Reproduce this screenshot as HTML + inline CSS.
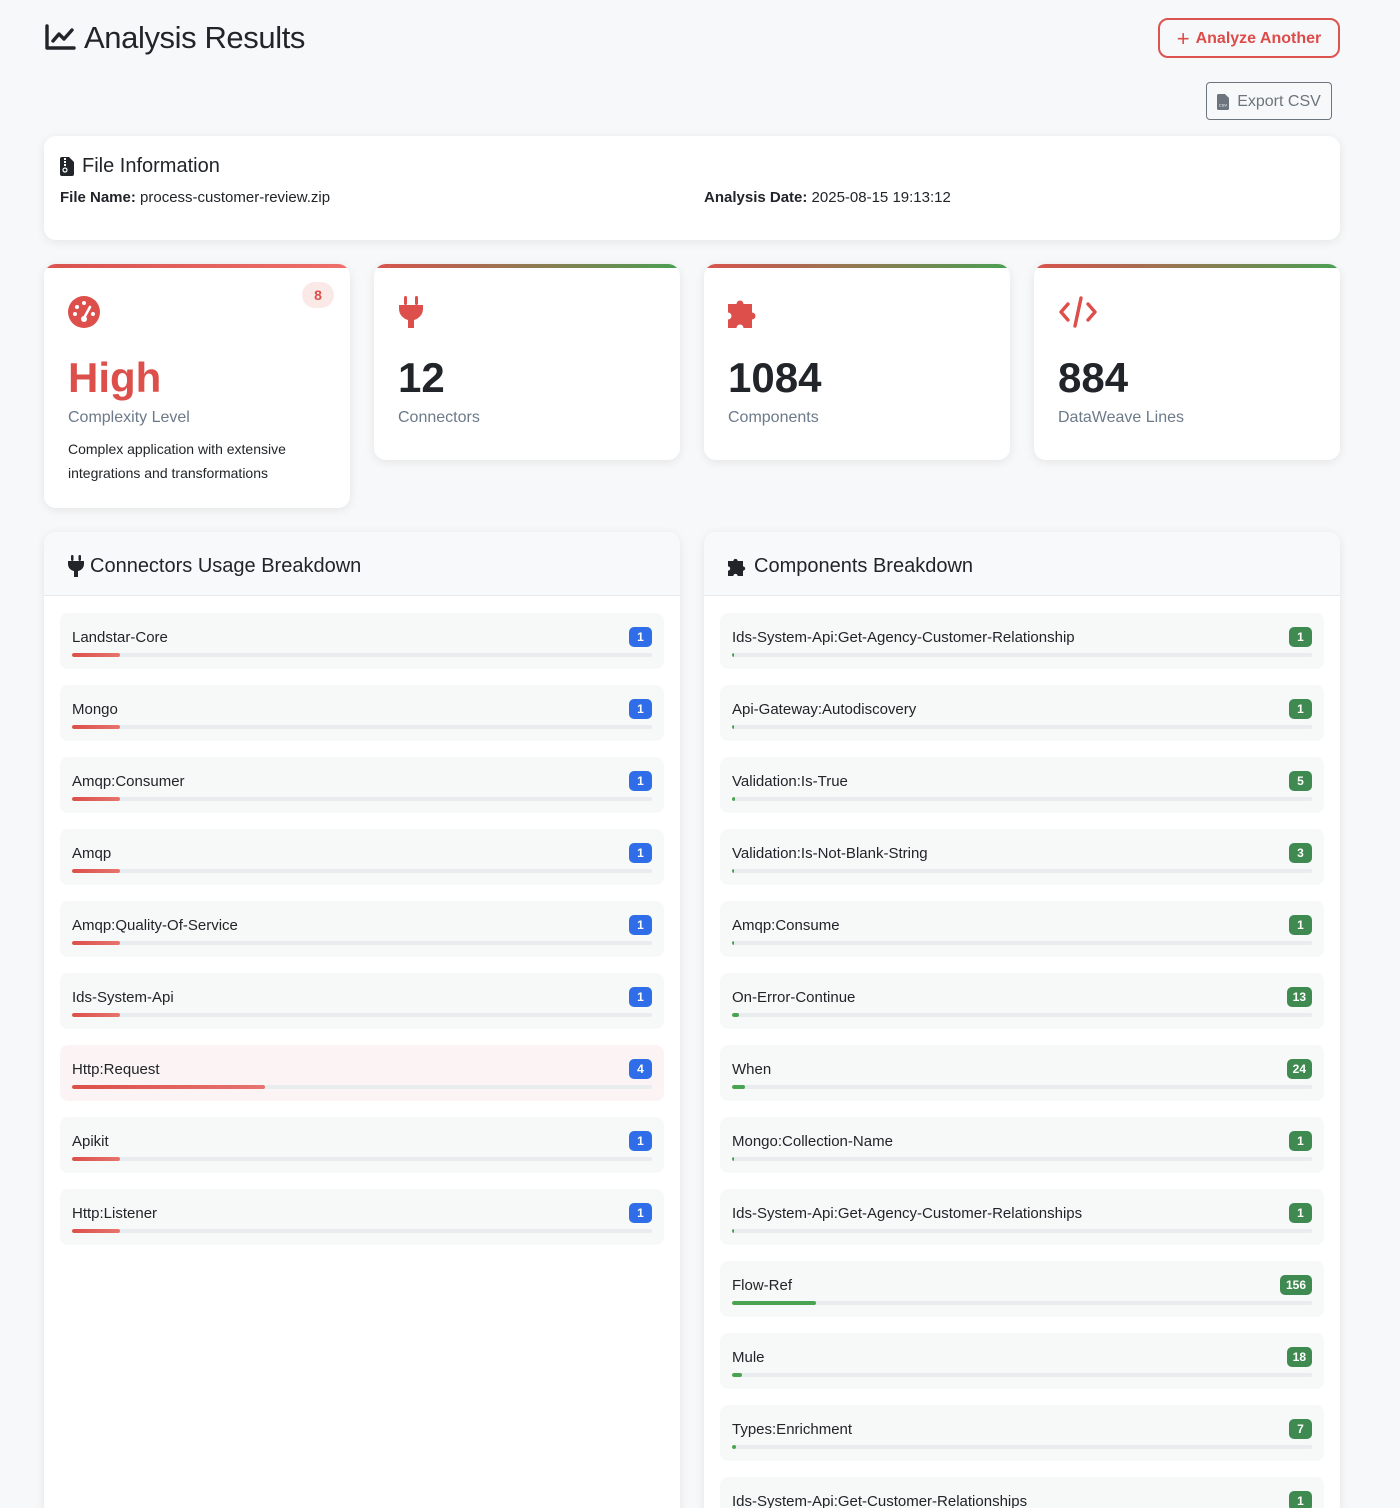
<!DOCTYPE html>
<html><head><meta charset="utf-8">
<style>
*{box-sizing:border-box;margin:0;padding:0}
html,body{width:1400px;height:1508px;overflow:hidden}
body{background:#f7f8f9;font-family:"Liberation Sans",sans-serif;color:#212529;position:relative}
.abs{position:absolute}
h1{position:absolute;left:44px;top:20px;font-size:31px;font-weight:400;color:#212529;display:flex;align-items:center;gap:8px;letter-spacing:-0.4px}
.btn-an{position:absolute;left:1158px;top:18px;width:182px;height:40px;border:2px solid #dc5350;border-radius:10px;color:#dc4c4a;font-weight:700;font-size:16px;display:flex;align-items:center;justify-content:center;gap:6px;padding-top:2px}
.btn-ex{position:absolute;left:1206px;top:82px;width:126px;height:38px;border:1px solid #6c757d;border-radius:4px;color:#6c757d;font-size:16px;display:flex;align-items:center;justify-content:center;gap:8px;padding-top:2px}
.card{position:absolute;background:#fff;border-radius:12px;box-shadow:0 2px 10px rgba(0,0,0,.08)}
.stat{top:264px;width:306px;height:196px;overflow:hidden}
.stat .bar{position:absolute;left:0;top:0;right:0;height:4px;background:linear-gradient(90deg,#d9534f,#4a9f52)}
.stat .ic{position:absolute;left:24px;top:32px}
.stat .num{position:absolute;left:24px;top:90px;font-size:42px;font-weight:700;color:#212529}
.stat .lbl{position:absolute;left:24px;top:145px;font-size:16px;color:#6c7a89}
.panel{top:532px;width:636px;height:1000px;overflow:hidden}
.ph{height:64px;background:#f8f9fa;border-bottom:1px solid #e6e9ec;display:flex;align-items:center;padding-left:24px;padding-top:5px;gap:6px;font-size:20px;color:#212529}
.item{position:absolute;left:16px;width:604px;height:56px;background:#f7f9f9;border-radius:8px}
.item.hl{background:#fcf4f4}
.item .nm{position:absolute;left:12px;top:16px;font-size:15px;color:#212529}
.item .bd{position:absolute;right:12px;top:14px;height:20px;min-width:23px;padding:0 6px;border-radius:5px;color:#fff;font-size:12px;font-weight:700;display:flex;align-items:center;justify-content:center}
.item .tr{position:absolute;left:12px;right:12px;top:40px;height:4px;background:#e9ecef;border-radius:2px;overflow:hidden}
.item .fl{height:4px;border-radius:2px}
.red .bd{background:#2f6ee8}.red .fl{background:linear-gradient(90deg,#dc4f4a,#e6736f)}
.grn .bd{background:#3f8a50}.grn .fl{background:#4aa352}
</style></head><body>

<h1><svg width="32" height="28" viewBox="0 0 32 28"><path d="M3 2v22h27" fill="none" stroke="#212529" stroke-width="3.4" stroke-linecap="round" stroke-linejoin="round"/><path d="M9 17l6-7 5 5 8-9" fill="none" stroke="#212529" stroke-width="3.4" stroke-linecap="round" stroke-linejoin="round"/></svg>Analysis Results</h1>

<div class="btn-an"><span style="font-size:22px;font-weight:400;line-height:1">+</span> Analyze Another</div>
<div class="btn-ex"><svg width="12" height="16" viewBox="0 0 12 16"><path d="M0 1.5A1.5 1.5 0 0 1 1.5 0H8l4 4v10.5A1.5 1.5 0 0 1 10.5 16h-9A1.5 1.5 0 0 1 0 14.5z" fill="#6c757d"/><text x="6" y="12.5" font-size="4" fill="#fff" text-anchor="middle" font-family="Liberation Sans">CSV</text></svg>Export CSV</div>

<div class="card" style="left:44px;top:136px;width:1296px;height:104px">
  <div class="abs" style="left:16px;top:19px;font-size:20px;display:flex;align-items:center;gap:8px"><svg width="14" height="19" viewBox="0 0 14 19"><path d="M0 2a2 2 0 0 1 2-2h7l5 5v12a2 2 0 0 1-2 2H2a2 2 0 0 1-2-2z" fill="#212529"/><rect x="4" y="1" width="2" height="2" fill="#fff"/><rect x="4" y="4" width="2" height="2" fill="#fff"/><rect x="4" y="7" width="2" height="2" fill="#fff"/><circle cx="5" cy="13" r="2" fill="none" stroke="#fff" stroke-width="1.2"/></svg>File Information</div>
  <div class="abs" style="left:16px;top:53px;font-size:15px"><b>File Name:</b> process-customer-review.zip</div>
  <div class="abs" style="left:660px;top:53px;font-size:15px"><b>Analysis Date:</b> 2025-08-15 19:13:12</div>
</div>

<div class="card stat" style="left:44px;height:244px">
  <div class="bar" style="background:linear-gradient(90deg,#d9534f,#ee6f6b)"></div>
  <div class="ic"><svg width="32" height="32" viewBox="0 0 32 32"><circle cx="16" cy="16" r="16" fill="#dc4f4a"/><circle cx="16" cy="7" r="2" fill="#fff"/><circle cx="9" cy="11" r="2" fill="#fff"/><circle cx="7" cy="18" r="2" fill="#fff"/><circle cx="25" cy="18" r="2" fill="#fff"/><path d="M16 22l6-11" stroke="#fff" stroke-width="2.6" stroke-linecap="round"/><circle cx="16" cy="23" r="3" fill="#fff"/></svg></div>
  <div class="abs" style="right:16px;top:18px;width:32px;height:26px;border-radius:13px;background:#fbe9e8;color:#dc4f4a;font-size:14px;font-weight:700;display:flex;align-items:center;justify-content:center">8</div>
  <div class="num" style="color:#dc4f4a">High</div>
  <div class="lbl">Complexity Level</div>
  <div class="abs" style="left:24px;top:173px;width:260px;font-size:14px;line-height:24px;color:#212529">Complex application with extensive integrations and transformations</div>
</div>

<div class="card stat" style="left:374px">
  <div class="bar"></div>
  <div class="ic"><svg width="26" height="32" viewBox="0 0 26 32"><rect x="6" y="0" width="3" height="9" rx="1.5" fill="#dc4f4a"/><rect x="17" y="0" width="3" height="9" rx="1.5" fill="#dc4f4a"/><path d="M1 9h24v4c0 6-5 10-9 11v8h-6v-8C6 23 1 19 1 13z" fill="#dc4f4a"/></svg></div>
  <div class="num">12</div><div class="lbl">Connectors</div>
</div>

<div class="card stat" style="left:704px">
  <div class="bar"></div>
  <div class="ic"><svg width="32" height="32" viewBox="0 0 32 32"><path d="M0 8h8.5a3.5 3.5 0 1 1 7 0H24v8.5a3.5 3.5 0 1 1 0 7V32h-8.5a3.5 3.5 0 1 0-7 0H0v-8.5a3.5 3.5 0 1 0 0-7z" fill="#dc4f4a"/></svg></div>
  <div class="num">1084</div><div class="lbl">Components</div>
</div>

<div class="card stat" style="left:1034px">
  <div class="bar"></div>
  <div class="ic"><svg width="40" height="32" viewBox="0 0 40 32"><path d="M10 8l-7 8 7 8M30 8l7 8-7 8M23 2l-6 28" fill="none" stroke="#dc4f4a" stroke-width="3.4" stroke-linecap="round" stroke-linejoin="round"/></svg></div>
  <div class="num">884</div><div class="lbl">DataWeave Lines</div>
</div>

<div class="card panel" style="left:44px">
  <div class="ph"><svg width="16" height="22" viewBox="0 0 16 22"><rect x="3" y="0" width="2.5" height="6" rx="1.2" fill="#212529"/><rect x="10.5" y="0" width="2.5" height="6" rx="1.2" fill="#212529"/><path d="M0 6h16v3c0 4-3 6.5-6 7v6H6v-6C3 15.5 0 13 0 9z" fill="#212529"/></svg>Connectors Usage Breakdown</div>
  <div class="item red" style="top:81px"><div class="nm">Landstar-Core</div><div class="bd">1</div><div class="tr"><div class="fl" style="width:8.33%"></div></div></div>
  <div class="item red" style="top:153px"><div class="nm">Mongo</div><div class="bd">1</div><div class="tr"><div class="fl" style="width:8.33%"></div></div></div>
  <div class="item red" style="top:225px"><div class="nm">Amqp:Consumer</div><div class="bd">1</div><div class="tr"><div class="fl" style="width:8.33%"></div></div></div>
  <div class="item red" style="top:297px"><div class="nm">Amqp</div><div class="bd">1</div><div class="tr"><div class="fl" style="width:8.33%"></div></div></div>
  <div class="item red" style="top:369px"><div class="nm">Amqp:Quality-Of-Service</div><div class="bd">1</div><div class="tr"><div class="fl" style="width:8.33%"></div></div></div>
  <div class="item red" style="top:441px"><div class="nm">Ids-System-Api</div><div class="bd">1</div><div class="tr"><div class="fl" style="width:8.33%"></div></div></div>
  <div class="item red hl" style="top:513px"><div class="nm">Http:Request</div><div class="bd">4</div><div class="tr"><div class="fl" style="width:33.3%"></div></div></div>
  <div class="item red" style="top:585px"><div class="nm">Apikit</div><div class="bd">1</div><div class="tr"><div class="fl" style="width:8.33%"></div></div></div>
  <div class="item red" style="top:657px"><div class="nm">Http:Listener</div><div class="bd">1</div><div class="tr"><div class="fl" style="width:8.33%"></div></div></div>
</div>

<div class="card panel" style="left:704px">
  <div class="ph"><svg width="20" height="20" viewBox="0 0 32 32"><path d="M0 8h8.5a3.5 3.5 0 1 1 7 0H24v8.5a3.5 3.5 0 1 1 0 7V32h-8.5a3.5 3.5 0 1 0-7 0H0v-8.5a3.5 3.5 0 1 0 0-7z" fill="#212529"/></svg>Components Breakdown</div>
  <div class="item grn" style="top:81px"><div class="nm">Ids-System-Api:Get-Agency-Customer-Relationship</div><div class="bd">1</div><div class="tr"><div class="fl" style="width:0.4%"></div></div></div>
  <div class="item grn" style="top:153px"><div class="nm">Api-Gateway:Autodiscovery</div><div class="bd">1</div><div class="tr"><div class="fl" style="width:0.4%"></div></div></div>
  <div class="item grn" style="top:225px"><div class="nm">Validation:Is-True</div><div class="bd">5</div><div class="tr"><div class="fl" style="width:0.5%"></div></div></div>
  <div class="item grn" style="top:297px"><div class="nm">Validation:Is-Not-Blank-String</div><div class="bd">3</div><div class="tr"><div class="fl" style="width:0.4%"></div></div></div>
  <div class="item grn" style="top:369px"><div class="nm">Amqp:Consume</div><div class="bd">1</div><div class="tr"><div class="fl" style="width:0.4%"></div></div></div>
  <div class="item grn" style="top:441px"><div class="nm">On-Error-Continue</div><div class="bd">13</div><div class="tr"><div class="fl" style="width:1.2%"></div></div></div>
  <div class="item grn" style="top:513px"><div class="nm">When</div><div class="bd">24</div><div class="tr"><div class="fl" style="width:2.2%"></div></div></div>
  <div class="item grn" style="top:585px"><div class="nm">Mongo:Collection-Name</div><div class="bd">1</div><div class="tr"><div class="fl" style="width:0.4%"></div></div></div>
  <div class="item grn" style="top:657px"><div class="nm">Ids-System-Api:Get-Agency-Customer-Relationships</div><div class="bd">1</div><div class="tr"><div class="fl" style="width:0.4%"></div></div></div>
  <div class="item grn" style="top:729px"><div class="nm">Flow-Ref</div><div class="bd">156</div><div class="tr"><div class="fl" style="width:14.4%"></div></div></div>
  <div class="item grn" style="top:801px"><div class="nm">Mule</div><div class="bd">18</div><div class="tr"><div class="fl" style="width:1.7%"></div></div></div>
  <div class="item grn" style="top:873px"><div class="nm">Types:Enrichment</div><div class="bd">7</div><div class="tr"><div class="fl" style="width:0.65%"></div></div></div>
  <div class="item grn" style="top:945px"><div class="nm">Ids-System-Api:Get-Customer-Relationships</div><div class="bd">1</div><div class="tr"><div class="fl" style="width:0.4%"></div></div></div>
</div>

</body></html>
